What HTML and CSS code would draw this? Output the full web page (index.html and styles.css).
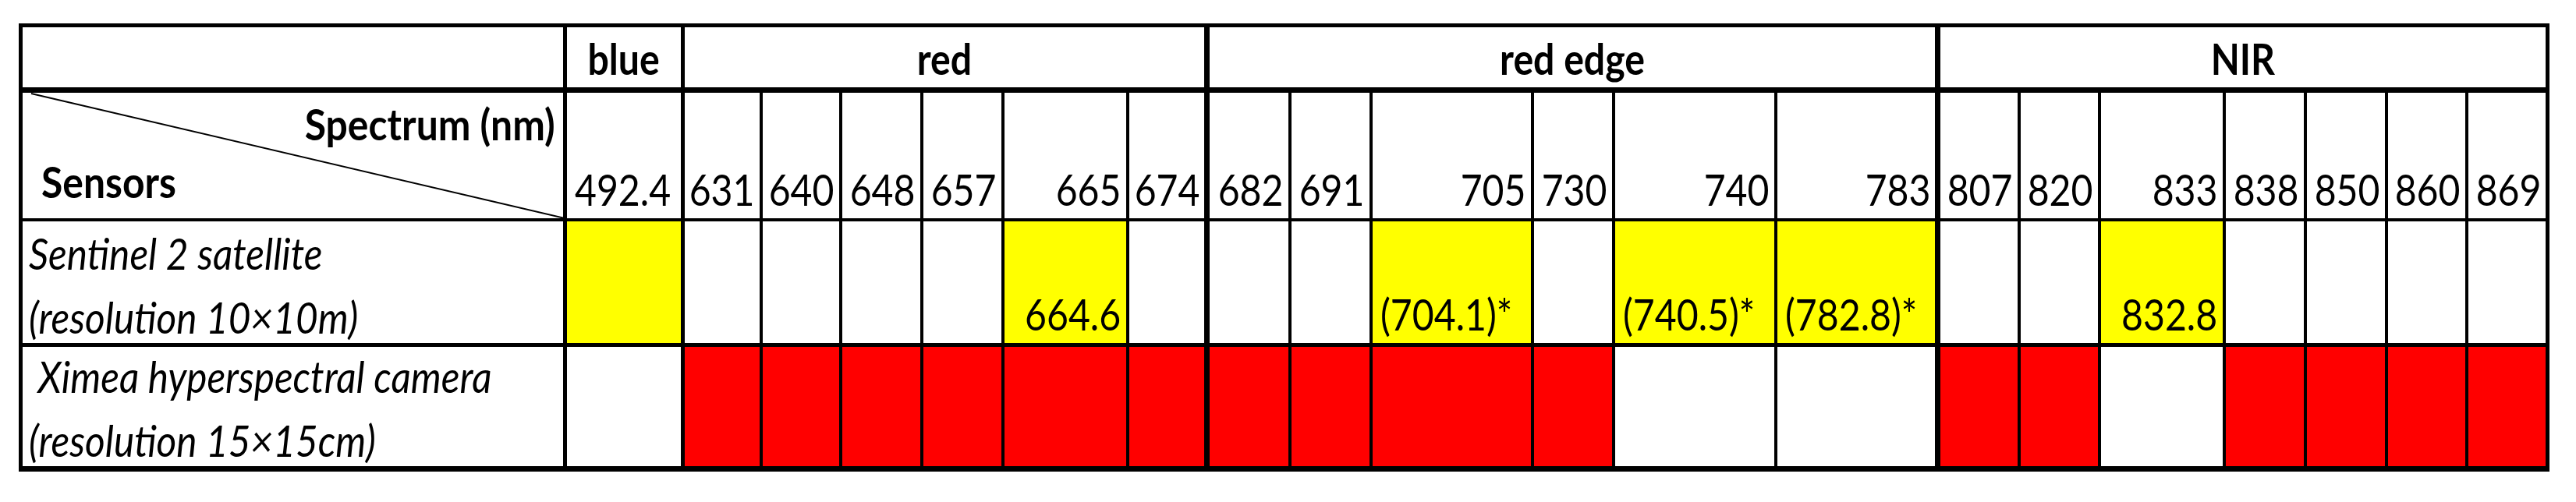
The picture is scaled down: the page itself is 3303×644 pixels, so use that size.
FILE: index.html
```html
<!DOCTYPE html>
<html lang="en">
<head>
<meta charset="utf-8">
<title>Spectral bands: Sentinel 2 and Ximea camera</title>
<link rel="stylesheet" href="styles.css">
</head>
<body>
<table class="bands">
  <colgroup>
    <col class="w698 s5"><col class="w151 s5">
    <col class="w100"><col class="w102"><col class="w104"><col class="w104"><col class="w160"><col class="w102 ge">
    <col class="w106"><col class="w104"><col class="w207"><col class="w104"><col class="w208"><col class="w208 ge">
    <col class="w104"><col class="w103"><col class="w160"><col class="w104"><col class="w104"><col class="w103"><col class="w104">
  </colgroup>
  <thead>
    <tr class="r-group">
      <th class="s5"></th>
      <th class="s5"><div class="c"><span class="t">blue</span></div></th>
      <th class="ge" colspan="6"><div class="c"><span class="t">red</span></div></th>
      <th class="ge" colspan="6"><div class="c"><span class="t">red edge</span></div></th>
      <th colspan="7"><div class="c"><span class="t">NIR</span></div></th>
    </tr>
    <tr class="r-wl">
      <th class="s5 diag">
        <svg class="diag-line" viewBox="0 0 693 161" preserveAspectRatio="none" aria-hidden="true"><line x1="11" y1="1" x2="693" y2="161" stroke="#000" stroke-width="2" vector-effect="non-scaling-stroke"/></svg>
        <div class="r spec"><span class="t">Spectrum (nm)</span></div>
        <div class="l sensors"><span class="t">Sensors</span></div>
      </th>
      <th class="s5"><div class="l"><span class="t">492.4</span></div></th>
      <th><div class="r"><span class="t">631</span></div></th>
      <th><div class="r"><span class="t">640</span></div></th>
      <th><div class="r"><span class="t">648</span></div></th>
      <th><div class="r"><span class="t">657</span></div></th>
      <th><div class="r"><span class="t">665</span></div></th>
      <th class="ge"><div class="r"><span class="t">674</span></div></th>
      <th><div class="r"><span class="t">682</span></div></th>
      <th><div class="r"><span class="t">691</span></div></th>
      <th><div class="r"><span class="t">705</span></div></th>
      <th><div class="r"><span class="t">730</span></div></th>
      <th><div class="r"><span class="t">740</span></div></th>
      <th class="ge"><div class="r"><span class="t">783</span></div></th>
      <th><div class="r"><span class="t">807</span></div></th>
      <th><div class="r"><span class="t">820</span></div></th>
      <th><div class="r"><span class="t">833</span></div></th>
      <th><div class="r"><span class="t">838</span></div></th>
      <th><div class="r"><span class="t">850</span></div></th>
      <th><div class="r"><span class="t">860</span></div></th>
      <th><div class="r"><span class="t">869</span></div></th>
    </tr>
  </thead>
  <tbody>
    <tr class="r-s2">
      <th class="s5 name">
        <div class="name-box">
          <div class="l0"><span class="t">Sentinel 2 satellite</span></div>
          <div class="l0"><span class="t">(resolution 10×10m)</span></div>
        </div>
      </th>
      <td class="s5 y"></td>
      <td></td><td></td><td></td><td></td>
      <td class="y"><div class="r"><span class="t">664.6</span></div></td>
      <td class="ge"></td>
      <td></td><td></td>
      <td class="y"><div class="l"><span class="t">(704.1)*</span></div></td>
      <td></td>
      <td class="y"><div class="l"><span class="t">(740.5)*</span></div></td>
      <td class="ge y"><div class="l"><span class="t">(782.8)*</span></div></td>
      <td></td><td></td>
      <td class="y"><div class="r"><span class="t">832.8</span></div></td>
      <td></td><td></td><td></td><td></td>
    </tr>
    <tr class="r-xi">
      <th class="s5 name">
        <div class="name-box up">
          <div class="l0"><span class="t"> Ximea hyperspectral camera</span></div>
          <div class="l0"><span class="t">(resolution 15×15cm)</span></div>
        </div>
      </th>
      <td class="s5"></td>
      <td class="x"></td><td class="x"></td><td class="x"></td><td class="x"></td><td class="x"></td><td class="x ge"></td>
      <td class="x"></td><td class="x"></td><td class="x"></td><td class="x"></td><td></td><td class="ge"></td>
      <td class="x"></td><td class="x"></td><td></td><td class="x"></td><td class="x"></td><td class="x"></td><td class="x"></td>
    </tr>
  </tbody>
</table>
</body>
</html>
```

FILE: styles.css
```css
html, body {
  margin: 0;
  background: #fff;
}

body {
  font-family: Lato, "Open Sans", "Noto Sans", sans-serif;
  color: #000;
  --sx: 0.86;
}

.bands {
  border-collapse: collapse;
  table-layout: fixed;
  width: 3245px;
  margin: 30px 0 0 24px;
  border: 5px solid #000;
  border-bottom-width: 7px;
  font-size: 56px;
  line-height: 74px;
}

.bands th,
.bands td {
  border: 4px solid #000;
  padding: 0;
  vertical-align: bottom;
  text-align: left;
  font-weight: 400;
}

/* column widths (grid line to grid line) */
col.w698 { width: 698px; }
col.w151 { width: 151px; }
col.w100 { width: 100px; }
col.w102 { width: 102px; }
col.w103 { width: 103px; }
col.w104 { width: 104px; }
col.w106 { width: 106px; }
col.w160 { width: 160px; }
col.w207 { width: 207px; }
col.w208 { width: 208px; }

col.s5, .bands .s5 { border-right: 5px solid #000; }
col.ge, .bands .ge { border-right: 7px solid #000; }

/* rows */
.r-group { height: 83px; }
.r-group th {
  border-bottom-width: 7px;
  font-weight: 700;
}
.r-wl { height: 166px; }
.r-s2 { height: 161px; }
.r-s2 > th,
.r-s2 > td { border-bottom-width: 5px; }
.r-xi { height: 159px; }

/* cell fills */
.y { background: #ffff00; }
.x { background: #ff0000; }

/* text boxes */
.c, .l, .r, .l0 {
  display: flex;
  white-space: pre;
}
.c { justify-content: center; }
.l { justify-content: flex-start; padding-left: 10px; }
.l0 { justify-content: flex-start; padding-left: 8px; }
.r { justify-content: flex-end; padding-right: 6px; }

.t {
  display: inline-block;
  transform: scaleX(var(--sx));
}
.c .t { transform-origin: center; }
.l .t, .l0 .t { transform-origin: left; }
.r .t { transform-origin: right; }

/* diagonal corner cell */
.bands .diag {
  position: relative;
  vertical-align: top;
  padding-top: 3px;
  font-weight: 700;
  --sx: 0.89;
}
.diag-line {
  position: absolute;
  left: 0;
  top: 0;
  width: 100%;
  height: 100%;
}
.spec { padding-right: 10px; position: relative; }
.sensors { padding-left: 24px; position: relative; }

/* sensor names */
.bands .name {
  vertical-align: top;
  font-style: italic;
  --sx: 0.885;
}
.name-box {
  height: 150px;
  line-height: 82px;
}
.name-box.up { margin-top: -3px; }
```
